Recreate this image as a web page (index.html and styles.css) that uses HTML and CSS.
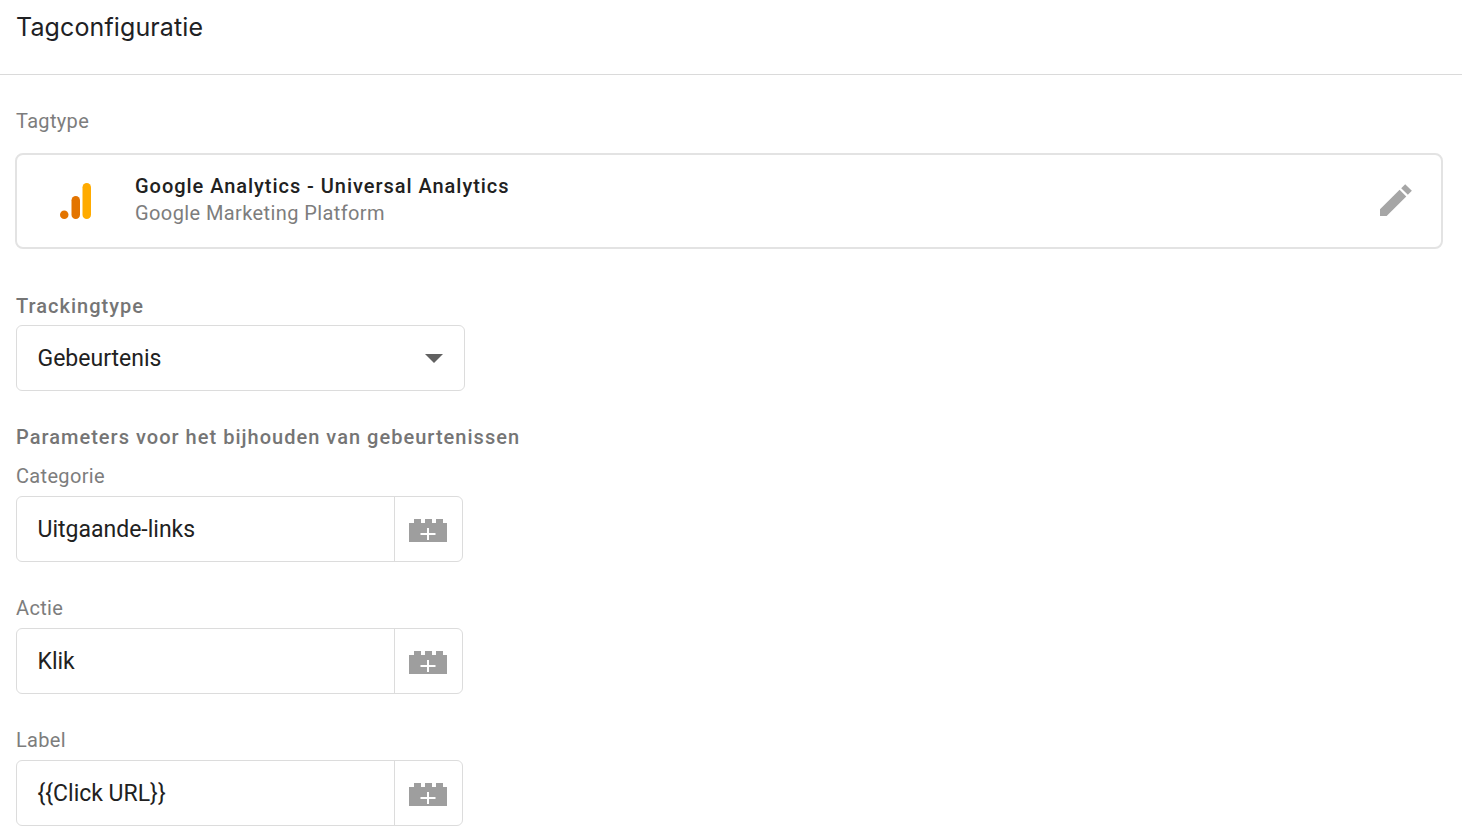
FILE: index.html
```html
<!DOCTYPE html>
<html lang="en">
<head>
  <meta charset="UTF-8">
  <title>Tagconfiguratie</title>
  <link rel="stylesheet" href="styles.css">
</head>
<body>
<div class="title-bar">Tagconfiguratie</div>
<div class="content">
  <div class="field-label tag-label">Tagtype</div>
  <div class="tag-card">
    <svg class="ga-icon" width="32" height="36" viewBox="0 0 32 36">
      <rect x="22.500" y="0" width="8.500" height="36" rx="4.250" fill="#ffab00"/>
      <rect x="11.500" y="13" width="8.500" height="23" rx="4.250" fill="#e37400"/>
      <circle cx="4.250" cy="31.750" r="4.250" fill="#e37400"/>
    </svg>
    <div class="tag-text">
      <div class="tag-name">Google Analytics - Universal Analytics</div>
      <div class="tag-vendor">Google Marketing Platform</div>
    </div>
    <svg class="edit-icon" width="32" height="32" viewBox="0 0 24 24">
      <path fill="#a6a6a6" d="M0 24v-5L14.700 4.300l5 5L5 24H0zM15.900 3.100l3-3 5 5-3 3-5-5z"/>
    </svg>
  </div>

  <div class="group-label track-label">Trackingtype</div>
  <div class="select-box">
    <span>Gebeurtenis</span>
    <span class="caret"></span>
  </div>

  <div class="group-label params-label">Parameters voor het bijhouden van gebeurtenissen</div>

  <div class="field-label">Categorie</div>
  <div class="input-row">
    <div class="input-value">Uitgaande-links</div>
    <div class="var-btn">
      <svg width="38" height="23" viewBox="0 0 38 23"><path fill="#9e9e9e" d="M0 4h5V0h7v4h4V0h7v4h4V0h7v4h4v19H0z"/><path fill="#fff" d="M18 9h2v5h6.500v2H20v5h-2v-5h-6.500v-2H18z"/></svg>
    </div>
  </div>

  <div class="field-label gap">Actie</div>
  <div class="input-row">
    <div class="input-value">Klik</div>
    <div class="var-btn">
      <svg width="38" height="23" viewBox="0 0 38 23"><path fill="#9e9e9e" d="M0 4h5V0h7v4h4V0h7v4h4V0h7v4h4v19H0z"/><path fill="#fff" d="M18 9h2v5h6.500v2H20v5h-2v-5h-6.500v-2H18z"/></svg>
    </div>
  </div>

  <div class="field-label gap">Label</div>
  <div class="input-row">
    <div class="input-value">{{Click URL}}</div>
    <div class="var-btn">
      <svg width="38" height="23" viewBox="0 0 38 23"><path fill="#9e9e9e" d="M0 4h5V0h7v4h4V0h7v4h4V0h7v4h4v19H0z"/><path fill="#fff" d="M18 9h2v5h6.500v2H20v5h-2v-5h-6.500v-2H18z"/></svg>
    </div>
  </div>
</div>
</body>
</html>
```

FILE: styles.css
```css
html, body {
  margin: 0;
  padding: 0;
  height: 100%;
  background: #fff;
  overflow: hidden;
}

body {
  font-family: Roboto, sans-serif;
  color: #212121;
}

.title-bar {
  height: 64px;
  padding: 10px 16px 0;
  border-bottom: 1px solid #dadada;
  font-family: Inter, sans-serif;
  font-size: 25px;
  line-height: 34px;
  letter-spacing: 0.12px;
  color: #202124;
}

.content {
  padding: 0 19px 0 16px;
}

.field-label {
  font-size: 20px;
  line-height: 24px;
  letter-spacing: 0.33px;
  color: #7d7d7d;
}

.tag-label {
  margin-top: 34px;
}

.gap {
  margin-top: 34px;
}

.tag-card {
  display: flex;
  align-items: center;
  box-sizing: border-box;
  height: 96px;
  margin: 20px 0 0 -1px;
  padding: 0 29px 0 43px;
  border: 2px solid #e3e3e3;
  border-radius: 8px;
}

.ga-icon {
  flex: none;
}

.tag-text {
  flex: 1;
  margin-left: 43px;
  padding-bottom: 2px;
}

.edit-icon {
  margin-bottom: 2px;
}

.tag-name {
  font-size: 20px;
  line-height: 27px;
  font-weight: 500;
  letter-spacing: 0.96px;
}

.tag-vendor {
  font-size: 20px;
  line-height: 27px;
  letter-spacing: 0.4px;
  color: #7d7d7d;
}

.group-label {
  font-size: 20px;
  line-height: 26px;
  font-weight: 500;
  letter-spacing: 1.02px;
  color: #757575;
}

.track-label {
  margin-top: 44px;
}

.select-box {
  display: flex;
  align-items: center;
  justify-content: space-between;
  box-sizing: border-box;
  width: 449px;
  height: 66px;
  margin-top: 6px;
  padding: 0 21px 0 20.500px;
  border: 1px solid #dcdcdc;
  border-radius: 6px;
  font-size: 23px;
}

.caret {
  width: 0;
  height: 0;
  border-left: 9px solid transparent;
  border-right: 9px solid transparent;
  border-top: 9px solid #616161;
}

.params-label {
  margin-top: 33px;
}

.params-label + .field-label {
  margin-top: 14px;
}

.input-row {
  display: flex;
  box-sizing: border-box;
  width: 447px;
  height: 66px;
  margin-top: 8px;
  border: 1px solid #dcdcdc;
  border-radius: 6px;
}

.input-value {
  flex: 1;
  padding: 1px 0 0 20.500px;
  font-size: 23px;
  line-height: 64px;
}

.var-btn {
  display: flex;
  align-items: center;
  justify-content: center;
  width: 67px;
  border-left: 1px solid #dcdcdc;
}

.var-btn svg {
  margin: 3px 0 0 -1px;
}
```
